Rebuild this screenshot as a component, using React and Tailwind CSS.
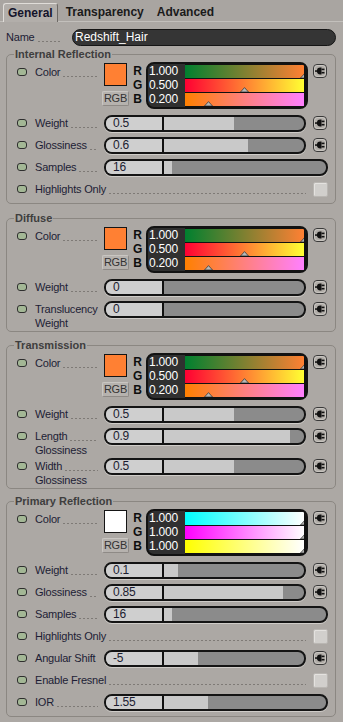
const orangeBars = [
  { v: '1.000', pos: 1, grad: 'bg-[linear-gradient(to_right,#00802f,#ff8033)]' },
  { v: '0.500', pos: 0.5, grad: 'bg-[linear-gradient(to_right,#ff0033,#ffff33)]' },
  { v: '0.200', pos: 0.2, grad: 'bg-[linear-gradient(to_right,#ff8000,#ff80ff)]' },
]

const whiteBars = [
  { v: '1.000', pos: 1, grad: 'bg-[linear-gradient(to_right,#00ffff,#ffffff)]' },
  { v: '1.000', pos: 1, grad: 'bg-[linear-gradient(to_right,#ff00ff,#ffffff)]' },
  { v: '1.000', pos: 1, grad: 'bg-[linear-gradient(to_right,#ffff00,#ffffff)]' },
]

const groups = [
  {
    title: 'Internal Reflection',
    mt: 'mt-[2px]',
    swatch: 'bg-[#ff8033]',
    bars: orangeBars,
    rows: [
      { label: ['Weight'], value: '0.5', fill: 0.5, plug: true },
      { label: ['Glossiness'], value: '0.6', fill: 0.6, plug: true },
      { label: ['Samples'], value: '16', fill: 0.05, wide: true },
      { label: ['Highlights Only'], check: true },
    ],
  },
  {
    title: 'Diffuse',
    mt: 'mt-[8px]',
    swatch: 'bg-[#ff8033]',
    bars: orangeBars,
    rows: [
      { label: ['Weight'], value: '0', fill: 0, plug: true },
      { label: ['Translucency', 'Weight'], value: '0', fill: 0, plug: true },
    ],
  },
  {
    title: 'Transmission',
    mt: 'mt-[7px]',
    swatch: 'bg-[#ff8033]',
    bars: orangeBars,
    rows: [
      { label: ['Weight'], value: '0.5', fill: 0.5, plug: true },
      { label: ['Length', 'Glossiness'], value: '0.9', fill: 0.9, plug: true },
      { label: ['Width', 'Glossiness'], value: '0.5', fill: 0.5, plug: true },
    ],
  },
  {
    title: 'Primary Reflection',
    mt: 'mt-[6px]',
    swatch: 'bg-white',
    bars: whiteBars,
    rows: [
      { label: ['Weight'], value: '0.1', fill: 0.1, plug: true },
      { label: ['Glossiness'], value: '0.85', fill: 0.85, plug: true },
      { label: ['Samples'], value: '16', fill: 0.05, wide: true },
      { label: ['Highlights Only'], check: true },
      { label: ['Angular Shift'], value: '-5', fill: 0.245, plug: true },
      { label: ['Enable Fresnel'], check: true },
      { label: ['IOR'], value: '1.55', fill: 0.27, wide: true },
    ],
  },
]

function Led() {
  return <span className="block w-[10px] h-[8px] rounded-[3px] border border-[#2e2e2e] bg-[#a3b795]" />
}

function Leader({ className = '' }) {
  return (
    <span
      className={`block h-px flex-1 min-w-0 mt-[9px] ml-[3px] bg-[repeating-linear-gradient(to_right,#7e7a76_0_2px,transparent_2px_4px)] ${className}`}
    />
  )
}

function Plug({ className = '' }) {
  return (
    <svg width="14" height="14" viewBox="0 0 14 14" className={`shrink-0 ${className}`}>
      <rect x="0.5" y="0.5" width="13" height="13" rx="3.5" fill="#b1ada8" stroke="#3a3a3a" />
      <rect x="1.6" y="1.6" width="10.8" height="10.8" rx="2.5" fill="none" stroke="#d6d3ce" strokeWidth="0.7" />
      <rect x="2" y="6.3" width="2.5" height="1.5" fill="#111" />
      <path d="M8.5 3.6 V10.4 H7.3 A3.4 3.4 0 0 1 7.3 3.6 Z" fill="#111" />
      <rect x="8.5" y="4.6" width="3" height="1.6" fill="#111" />
      <rect x="8.5" y="7.9" width="3" height="1.6" fill="#111" />
    </svg>
  )
}

function Checkbox() {
  return (
    <span className="block ml-[7px] w-[15px] h-[15px] rounded-[2px] bg-[#d1cfcc] border border-[#b9b6b2] shadow-[inset_1px_1px_0_#e4e2df]" />
  )
}

function Marker({ pos }) {
  return (
    <svg
      width="9"
      height="5"
      viewBox="0 0 9 5"
      className="absolute bottom-0"
      style={{ left: `calc(${pos * 100}% - 4.5px)` }}
    >
      <polygon points="0.5,5 4.5,0.6 8.5,5" fill="#b8b8b8" stroke="#3a3a3a" strokeWidth="0.8" />
    </svg>
  )
}

function Slider({ value, fill, wide }) {
  return (
    <div
      className={`${wide ? 'w-[224px]' : 'w-[202px]'} h-[17px] shrink-0 flex rounded-[8px] border-2 border-[#141414] bg-[#8b8b8b] overflow-hidden shadow-[0_1px_0_#cfccc8]`}
    >
      <div className="w-[56px] shrink-0 bg-[#cfcfcf] pl-[7px] text-[12px] leading-[13px] text-[#1c1c30]">{value}</div>
      <div className="w-[2px] shrink-0 bg-[#111]" />
      <div className="flex-1 flex">
        <div className="bg-[#c9c9c9]" style={{ width: `${fill * 100}%` }} />
      </div>
    </div>
  )
}

function Label({ lines, check }) {
  return (
    <div className={`${check ? 'w-[271px]' : 'w-[69px]'} shrink-0`}>
      <div className="h-[22px] flex items-center">
        <span className="whitespace-nowrap">{lines[0]}</span>
        <Leader className={check ? '' : 'mr-[6px]'} />
      </div>
      {lines[1] && <div className="-mt-[4px] leading-[14px]">{lines[1]}</div>}
    </div>
  )
}

function Row({ row }) {
  const two = row.label.length > 1
  return (
    <div className={`flex items-start ${two ? 'h-[30px]' : 'h-[22px]'}`}>
      <div className="h-[22px] w-[18px] shrink-0 flex items-center">
        <Led />
      </div>
      <Label lines={row.label} check={row.check} />
      <div className="h-[22px] flex items-center">
        {row.check ? (
          <Checkbox />
        ) : (
          <>
            <Slider value={row.value} fill={row.fill} wide={row.wide} />
            {row.plug && <Plug className="ml-[7px]" />}
          </>
        )}
      </div>
    </div>
  )
}

function ColorRow({ swatch, bars }) {
  return (
    <div className="flex items-start h-[50px]">
      <div className="h-[20px] w-[18px] shrink-0 flex items-center">
        <Led />
      </div>
      <div className="w-[69px] h-[20px] shrink-0 flex items-center">
        <span>Color</span>
        <Leader className="mr-[6px]" />
      </div>
      <div className="w-[25px] shrink-0 flex flex-col items-start pt-[1px]">
        <div className={`w-[23px] h-[23px] border border-[#151515] ${swatch}`} />
        <div className="mt-[5px] -ml-[2px] w-[27px] h-[15px] flex items-center justify-center rounded-[2px] bg-[#b6b2ae] border border-[#c9c6c2] border-b-[#8e8a86] border-r-[#8e8a86] text-[11px] leading-none text-[#333]">
          RGB
        </div>
      </div>
      <div className="w-[17px] shrink-0 pt-[3px] flex flex-col gap-[1px]">
        {['R', 'G', 'B'].map(l => (
          <div key={l} className="h-[13px] leading-[13px] text-center font-bold text-[12px] text-[#0e0e0e]">
            {l}
          </div>
        ))}
      </div>
      <div className="w-[162px] h-[47px] shrink-0 flex rounded-[8px] border-2 border-[#121212] bg-[#303030] overflow-hidden">
        <div className="w-[37px] shrink-0 pt-[1px] flex flex-col gap-[1px]">
          {bars.map((b, i) => (
            <div key={i} className="h-[13px] leading-[13px] text-[12px] text-white pl-[1px]">
              {b.v}
            </div>
          ))}
        </div>
        <div className="flex-1 bg-[#121212] pt-[1px] pr-[2px] flex flex-col gap-[1px]">
          {bars.map((b, i) => (
            <div key={i} className={`relative h-[13px] overflow-hidden ${b.grad}`}>
              <Marker pos={b.pos} />
            </div>
          ))}
        </div>
      </div>
      <Plug className="ml-[5px] mt-[2px]" />
    </div>
  )
}

function Group({ g }) {
  return (
    <fieldset className={`${g.mt} ml-[6px] mr-[7px] border border-[#8b8782] rounded-[5px] pl-[10px] pr-[7px] pb-[3px]`}>
      <legend className="-ml-[3px] px-[1px] text-[11px] leading-[12px] font-bold text-[#3e3e3e] tracking-normal">
        {g.title}
      </legend>
      <div className="pt-[2px]">
        <ColorRow swatch={g.swatch} bars={g.bars} />
        {g.rows.map((r, i) => (
          <Row key={i} row={r} />
        ))}
      </div>
    </fieldset>
  )
}

export default function App() {
  return (
    <div className="w-[343px] h-[722px] overflow-hidden bg-[#aca8a4] font-['Liberation_Sans',Arial,sans-serif] text-[11px] text-[#1d1d35] tracking-[-0.2px]">
      {/* Tabs */}
      <div className="h-[22px] flex items-end border-b border-[#c3c0bc] bg-[#a9a5a1] tracking-normal">
        <div className="ml-[3px] h-[19px] -mb-px px-[4px] flex items-center bg-[#b2aeaa] border border-b-0 border-l-[#e0ddd9] border-t-[#e0ddd9] border-r-[#6e6a66] rounded-t-[3px] text-[12px] font-bold text-[#14142a]">
          General
        </div>
        <div className="ml-[8px] h-[19px] flex items-center text-[12px] font-bold text-[#1a1a1a]">Transparency</div>
        <div className="ml-[13px] h-[19px] flex items-center text-[12px] font-bold text-[#1a1a1a]">Advanced</div>
      </div>

      {/* Name */}
      <div className="mt-[6px] h-[18px] flex items-center pl-[6px] pr-[7px]">
        <div className="w-[66px] h-[18px] shrink-0 flex items-center">
          <span>Name</span>
          <Leader className="mr-[10px]" />
        </div>
        <div className="w-[264px] h-[17px] rounded-full bg-[#353535] border border-[#151515] text-white text-[12px] leading-[15px] pl-[2px] tracking-normal">
          Redshift_Hair
        </div>
      </div>

      {groups.map(g => (
        <Group key={g.title} g={g} />
      ))}
    </div>
  )
}
